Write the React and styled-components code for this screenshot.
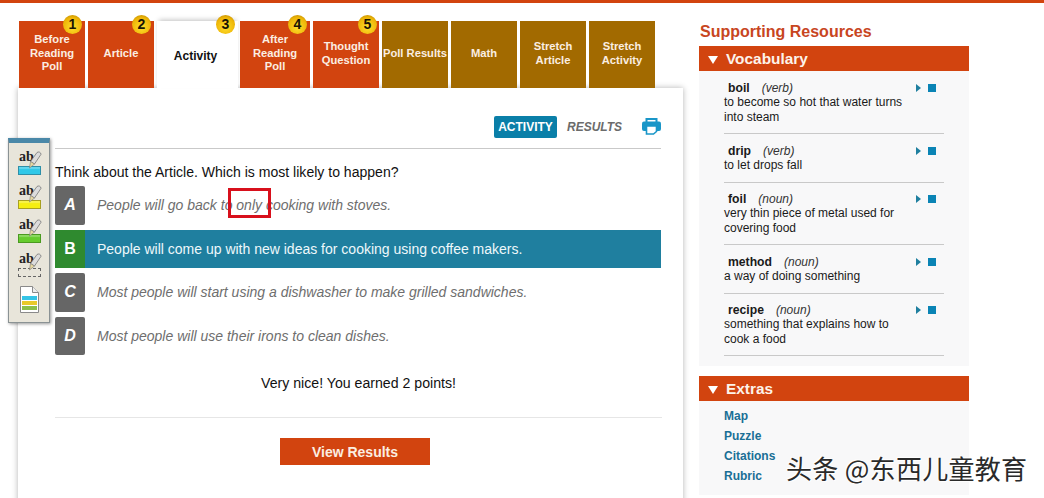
import React from 'react';
import styled, { createGlobalStyle } from 'styled-components';

const GlobalStyle = createGlobalStyle`
	html, body {
		margin: 0;
		padding: 0;
		height: 498px;
		overflow: hidden;
		background: #fff;
		font-family: "Liberation Sans", Arial, sans-serif;
	}
`;

const ORANGE = '#d2440f';
const BROWN = '#a26a00';
const BLUE = '#1f7f9f';
const LINK = '#1a6f96';

const Page = styled.div`
	position: relative;
	width: 1044px;
	height: 498px;
	overflow: hidden;
	border-top: 3px solid ${ORANGE};
	box-sizing: border-box;
	display: flex;
	align-items: flex-start;
`;

const Main = styled.div`
	width: 665px;
	margin-left: 18px;
	padding-top: 18px;
`;

const Tabs = styled.div`
	display: flex;
	gap: 3px;
	padding-left: 1px;
	height: 67px;
	position: relative;
	z-index: 2;
`;

const Tab = styled.div`
	position: relative;
	box-sizing: border-box;
	width: ${({ $w }) => $w}px;
	height: 67px;
	padding: ${({ $active }) => ($active ? '5px 4px 0 0' : '0 0 2px')};
	display: flex;
	align-items: center;
	justify-content: center;
	text-align: center;
	font-size: ${({ $active }) => ($active ? 12 : 11.2)}px;
	line-height: 13.4px;
	font-weight: bold;
	color: ${({ $active }) => ($active ? '#111' : '#fbeee2')};
	background: ${({ $active, $bg }) => ($active ? '#fff' : $bg)};
	box-shadow: ${({ $active }) => ($active ? '0 -3px 5px -2px rgba(0,0,0,.25)' : 'none')};
	margin: ${({ $active }) => ($active ? '0 -1px 0 0' : '0')};
`;

const Badge = styled.span`
	position: absolute;
	top: -6px;
	right: ${({ $r }) => $r}px;
	width: 19px;
	height: 19px;
	border-radius: 50%;
	background: radial-gradient(circle at 50% 65%, #ffdf2c 0%, #eeb507 62%, #a87a05 100%);
	color: #1a1405;
	font-size: 14px;
	line-height: 19px;
	font-weight: bold;
	text-align: center;
`;

const Panel = styled.div`
	box-sizing: border-box;
	height: 430px;
	background: #fff;
	box-shadow: 0 0 6px rgba(0, 0, 0, 0.3);
	padding: 28px 22px 0 37px;
`;

const PanelHead = styled.div`
	display: flex;
	align-items: flex-start;
	height: 32px;
	border-bottom: 1px solid #c9c9c9;
`;

const ViewPill = styled.span`
	margin-left: auto;
	height: 22px;
	width: 63px;
	border-radius: 2px;
	background: #0a7fa8;
	color: #fff;
	font-size: 12px;
	font-weight: bold;
	line-height: 22px;
	text-align: center;
`;

const ViewLink = styled.span`
	margin-left: 10px;
	width: 75px;
	color: #6b6b6b;
	font-size: 12px;
	line-height: 22px;
	font-weight: bold;
	font-style: italic;
`;

const PrintSvg = styled.svg`
	flex: none;
	margin-top: 2px;
	color: #1a96c8;
`;

const Prompt = styled.p`
	margin: 15px 0 6px;
	font-size: 14.05px;
	line-height: 16px;
	color: #111;
`;

const Choices = styled.div`
	display: flex;
	flex-direction: column;
	gap: 5px;
`;

const Choice = styled.div`
	position: relative;
	display: flex;
	align-items: center;
	height: 38.5px;
	background: ${({ $correct }) => ($correct ? BLUE : 'transparent')};
	color: ${({ $correct }) => ($correct ? '#eef8fb' : '#6e6e6e')};
	font-size: 14px;
	font-style: ${({ $correct }) => ($correct ? 'normal' : 'italic')};
`;

const Letter = styled.span`
	width: 30px;
	height: 100%;
	margin-right: 12px;
	flex: none;
	display: flex;
	align-items: center;
	justify-content: center;
	border-radius: ${({ $correct }) => ($correct ? '0' : '2px')};
	background: ${({ $correct }) => ($correct ? '#2f8a2f' : '#666')};
	color: #fff;
	font-size: 16px;
	font-weight: bold;
`;

const RedBox = styled.span`
	position: absolute;
	left: 173px;
	top: 2px;
	width: 37px;
	height: 24px;
	border: 3px solid #d8101c;
`;

const Feedback = styled.div`
	margin: 20px -1px 0 0;
	padding-bottom: 26px;
	border-bottom: 1px solid #e6e6e6;
	text-align: center;
	font-size: 14.15px;
	line-height: 16px;
	color: #111;
`;

const ButtonRow = styled.div`
	display: flex;
	justify-content: center;
	padding: 20px 6px 0 0;
`;

const ResultsButton = styled.button`
	width: 150px;
	height: 27px;
	border: 0;
	background: ${ORANGE};
	color: #fbeee2;
	font-family: inherit;
	font-size: 14px;
	font-weight: bold;
`;

const Side = styled.aside`
	width: 270px;
	margin-left: 16px;
	padding-top: 20px;
`;

const SideTitle = styled.h2`
	margin: 0 0 5px 1px;
	font-size: 16px;
	line-height: 18px;
	color: #c8461f;
`;

const SectionHead = styled.div`
	display: flex;
	align-items: center;
	gap: 8px;
	box-sizing: border-box;
	height: 25px;
	padding: 1px 0 0 9px;
	background: ${ORANGE};
	color: #fdf3ea;
	font-size: 15.4px;
	font-weight: bold;
`;

const SectionArrow = styled.span`
	width: 0;
	height: 0;
	margin-top: 2px;
	border-left: 5.5px solid transparent;
	border-right: 5.5px solid transparent;
	border-top: 8px solid #fff;
`;

const VocabList = styled.div`
	background: #f8f8f9;
	padding: 10px 25px 10px;
	margin-bottom: 10px;
`;

const VocabItem = styled.div`
	position: relative;
	border-bottom: 1px solid #c9c9c9;
	margin-bottom: 9.5px;
	padding-bottom: 9px;
	font-size: 12px;
	line-height: 14.4px;
	color: #1a1a1a;

	&:last-child {
		margin-bottom: 0;
	}
`;

const Word = styled.div`
	padding-left: 4px;
	b {
		font-size: 12.2px;
		margin-right: 12px;
	}
	i {
		color: #333;
	}
`;

const Definition = styled.div`
	width: 182px;
`;

const Audio = styled.div`
	position: absolute;
	top: 3px;
	right: 8px;
	display: flex;
	align-items: center;
	gap: 7px;
`;

const PlayMark = styled.span`
	width: 0;
	height: 0;
	border-top: 4px solid transparent;
	border-bottom: 4px solid transparent;
	border-left: 5px solid ${BLUE};
`;

const StopMark = styled.span`
	width: 8px;
	height: 8px;
	background: #0a84b5;
`;

const ExtrasList = styled.div`
	background: #f8f8f9;
	height: 89px;
	padding: 5px 25px 0;
	display: flex;
	flex-direction: column;
`;

const ExtraLink = styled.a`
	font-size: 12px;
	line-height: 20px;
	font-weight: bold;
	color: ${LINK};
`;

const Toolbar = styled.div`
	position: absolute;
	left: 8px;
	top: 135px;
	z-index: 3;
	box-sizing: border-box;
	width: 42px;
	height: 185px;
	background: #e8e5da;
	border: 1px solid #8a9294;
	border-top: 5px solid #4a88a8;
	box-shadow: 1px 1px 3px rgba(0, 0, 0, 0.4);
	display: flex;
	flex-direction: column;
	align-items: center;
	padding-top: 5px;
	gap: 6px;
`;

const Tool = styled.div`
	position: relative;
	width: 24px;
	height: 28px;
`;

const ToolLabel = styled.span`
	position: absolute;
	left: 2px;
	top: 2px;
	font-family: "Liberation Serif", serif;
	font-size: 14px;
	line-height: 14px;
	font-weight: bold;
	color: #222;
`;

const Swatch = styled.span`
	position: absolute;
	left: 1px;
	bottom: 1px;
	box-sizing: border-box;
	width: 23px;
	height: 9px;
	background: ${({ $fill }) => $fill};
	border: 1px ${({ $edge }) => ($edge ? `solid ${$edge}` : 'dashed #666')};
	box-shadow: ${({ $edge }) => ($edge ? 'inset 0 2px 1px rgba(255,255,255,.25)' : 'none')};
`;

const PenSvg = styled.svg`
	position: absolute;
	left: 11px;
	top: 3px;
	z-index: 1;
`;

const NotesSvg = styled.svg`
	margin-top: 2px;
`;

const Watermark = styled.div`
	position: absolute;
	left: 786px;
	top: 449px;
	z-index: 4;
	font-family: "Noto Sans CJK SC", sans-serif;
	font-size: 26px;
	line-height: 32px;
	letter-spacing: 0.3px;
	white-space: nowrap;
	color: #2a2a2a;
	text-shadow: 0 0 2px #fff, 1px 1px 1px #fff, -1px -1px 1px #fff;
`;

const tabs = [
	{ label: ['Before', 'Reading', 'Poll'], w: 66, bg: ORANGE, n: 1, r: 3 },
	{ label: ['Article'], w: 66, bg: ORANGE, n: 2, r: 3 },
	{ label: ['Activity'], w: 81, bg: ORANGE, n: 3, r: 3, active: true },
	{ label: ['After', 'Reading', 'Poll'], w: 70, bg: ORANGE, n: 4, r: 3 },
	{ label: ['Thought', 'Question'], w: 66, bg: ORANGE, n: 5, r: 2 },
	{ label: ['Poll Results'], w: 66, bg: BROWN },
	{ label: ['Math'], w: 66, bg: BROWN },
	{ label: ['Stretch', 'Article'], w: 66, bg: BROWN },
	{ label: ['Stretch', 'Activity'], w: 66, bg: BROWN },
];

const choices = [
	{ key: 'A', text: 'People will go back to only cooking with stoves.', marked: true },
	{ key: 'B', text: 'People will come up with new ideas for cooking using coffee makers.', correct: true },
	{ key: 'C', text: 'Most people will start using a dishwasher to make grilled sandwiches.' },
	{ key: 'D', text: 'Most people will use their irons to clean dishes.' },
];

const vocab = [
	{ word: 'boil', part: 'verb', def: 'to become so hot that water turns into steam' },
	{ word: 'drip', part: 'verb', def: 'to let drops fall' },
	{ word: 'foil', part: 'noun', def: 'very thin piece of metal used for covering food' },
	{ word: 'method', part: 'noun', def: 'a way of doing something' },
	{ word: 'recipe', part: 'noun', def: 'something that explains how to cook a food' },
];

const tools = [
	{ fill: '#30c8e8', edge: '#2e8fa8' },
	{ fill: '#f5ee10', edge: '#a8a020' },
	{ fill: '#66cc2e', edge: '#4a9a20' },
	{ fill: 'transparent' },
];

const Pen = () => (
	<PenSvg width="14" height="18" viewBox="0 0 14 18">
		<path d="M9 1.5c1.5-1.2 4-.2 4 1.8L6.5 13 2.5 10.5z" fill="#dcdcdc" stroke="#777" strokeWidth="0.8" />
		<path d="M2.5 10.5L6.5 13 1.5 17z" fill="#e8d9a0" stroke="#777" strokeWidth="0.6" />
	</PenSvg>
);

const Notes = () => (
	<NotesSvg width="21" height="27" viewBox="0 0 21 27">
		<path d="M1.5.5h12l6 6v20h-18z" fill="#fff" stroke="#8a8a8a" />
		<path d="M13.5.5v6h6" fill="#eee" stroke="#8a8a8a" />
		<rect x="3" y="10" width="15" height="4" fill="#35c4e6" />
		<rect x="3" y="15" width="15" height="4" fill="#e9c92a" />
		<rect x="3" y="20" width="15" height="4" fill="#8cbf4a" />
	</NotesSvg>
);

const PrintIcon = () => (
	<PrintSvg width="19" height="17" viewBox="0 0 19 17">
		<path d="M4.5 4V1h10v3" fill="none" stroke="currentColor" strokeWidth="2" />
		<rect x="0" y="3.5" width="19" height="9.5" rx="2" fill="currentColor" />
		<path d="M4.5 8h10v5.5L11.5 16h-7z" fill="#fff" stroke="currentColor" strokeWidth="1.6" />
	</PrintSvg>
);

export default function App() {
	return (
		<Page>
			<GlobalStyle />
			<Toolbar>
				{tools.map((tool) => (
					<Tool key={tool.fill}>
						<ToolLabel>ab</ToolLabel>
						<Pen />
						<Swatch $fill={tool.fill} $edge={tool.edge} />
					</Tool>
				))}
				<Notes />
			</Toolbar>
			<Main>
				<Tabs>
					{tabs.map((tab) => (
						<Tab key={tab.label.join(' ')} $w={tab.w} $bg={tab.bg} $active={tab.active}>
							<span>
								{tab.label.map((line) => (
									<div key={line}>{line}</div>
								))}
							</span>
							{tab.n && <Badge $r={tab.r}>{tab.n}</Badge>}
						</Tab>
					))}
				</Tabs>
				<Panel>
					<PanelHead>
						<ViewPill>ACTIVITY</ViewPill>
						<ViewLink>RESULTS</ViewLink>
						<PrintIcon />
					</PanelHead>
					<Prompt>Think about the Article. Which is most likely to happen?</Prompt>
					<Choices>
						{choices.map((c) => (
							<Choice key={c.key} $correct={c.correct}>
								<Letter $correct={c.correct}>{c.key}</Letter>
								{c.text}
								{c.marked && <RedBox />}
							</Choice>
						))}
					</Choices>
					<Feedback>Very nice! You earned 2 points!</Feedback>
					<ButtonRow>
						<ResultsButton>View Results</ResultsButton>
					</ButtonRow>
				</Panel>
			</Main>
			<Side>
				<SideTitle>Supporting Resources</SideTitle>
				<SectionHead>
					<SectionArrow />
					Vocabulary
				</SectionHead>
				<VocabList>
					{vocab.map((v) => (
						<VocabItem key={v.word}>
							<Word>
								<b>{v.word}</b>
								<i>({v.part})</i>
							</Word>
							<Definition>{v.def}</Definition>
							<Audio>
								<PlayMark />
								<StopMark />
							</Audio>
						</VocabItem>
					))}
				</VocabList>
				<SectionHead>
					<SectionArrow />
					Extras
				</SectionHead>
				<ExtrasList>
					{['Map', 'Puzzle', 'Citations', 'Rubric'].map((name) => (
						<ExtraLink key={name}>{name}</ExtraLink>
					))}
				</ExtrasList>
			</Side>
			<Watermark>头条 @东西儿童教育</Watermark>
		</Page>
	);
}
